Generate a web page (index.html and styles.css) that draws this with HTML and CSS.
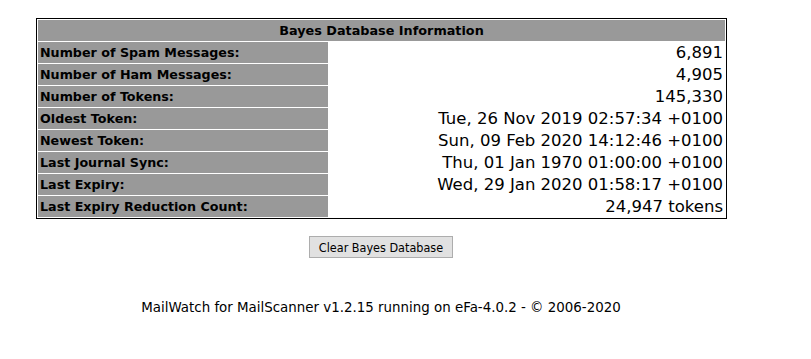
FILE: index.html
```html
<!DOCTYPE html>
<html lang="en">
<head>
    <meta charset="UTF-8">
    <title>Bayes Database Information</title>
    <link rel="stylesheet" href="styles.css">
</head>
<body>
    <div class="page">
        <table class="bayes">
            <tr>
                <th class="heading" colspan="2">Bayes Database Information</th>
            </tr>
            <tr>
                <td class="label">Number of Spam Messages:</td>
                <td class="value">6,891</td>
            </tr>
            <tr>
                <td class="label">Number of Ham Messages:</td>
                <td class="value">4,905</td>
            </tr>
            <tr>
                <td class="label">Number of Tokens:</td>
                <td class="value">145,330</td>
            </tr>
            <tr>
                <td class="label">Oldest Token:</td>
                <td class="value">Tue, 26 Nov 2019 02:57:34 +0100</td>
            </tr>
            <tr>
                <td class="label">Newest Token:</td>
                <td class="value">Sun, 09 Feb 2020 14:12:46 +0100</td>
            </tr>
            <tr>
                <td class="label">Last Journal Sync:</td>
                <td class="value">Thu, 01 Jan 1970 01:00:00 +0100</td>
            </tr>
            <tr>
                <td class="label">Last Expiry:</td>
                <td class="value">Wed, 29 Jan 2020 01:58:17 +0100</td>
            </tr>
            <tr>
                <td class="label">Last Expiry Reduction Count:</td>
                <td class="value">24,947 tokens</td>
            </tr>
        </table>

        <form class="clear-form">
            <button type="button" class="clear-btn">Clear Bayes Database</button>
        </form>

        <p class="footer">MailWatch for MailScanner v1.2.15 running on eFa-4.0.2 - &copy; 2006-2020</p>
    </div>
</body>
</html>
```
FILE: styles.css
```css
body {
    margin: 0;
    padding: 0;
    background-color: #fff;
    color: #000;
    font-family: "DejaVu Sans", Verdana, sans-serif;
}

.page {
    width: 762px;
    padding-top: 18px;
    text-align: center;
}

.bayes {
    width: 691px;
    margin: 0 0 0 36px;
    border: 1px solid #000;
    border-spacing: 1px;
    text-align: left;
}

.bayes td,
.bayes th {
    height: 21px;
    padding: 0 2px;
}

.heading {
    background-color: #999;
    font-weight: bold;
    font-size: 12.8px;
    text-align: center;
}

.label {
    width: 286px;
    background-color: #999;
    font-weight: bold;
    font-size: 12.7px;
}

.value {
    font-size: 16.5px;
    line-height: 19px;
    text-align: right;
}

.clear-form {
    margin: 0;
    padding-top: 17px;
}

.clear-btn {
    height: 22px;
    padding: 0 9px;
    background-color: #e1e1e1;
    border: 1px solid #adadad;
    font-family: "DejaVu Sans Condensed", "DejaVu Sans", sans-serif;
    font-size: 12.5px;
    color: #000;
}

.footer {
    margin: 42px 0 0 0;
    font-size: 13.4px;
}
```
